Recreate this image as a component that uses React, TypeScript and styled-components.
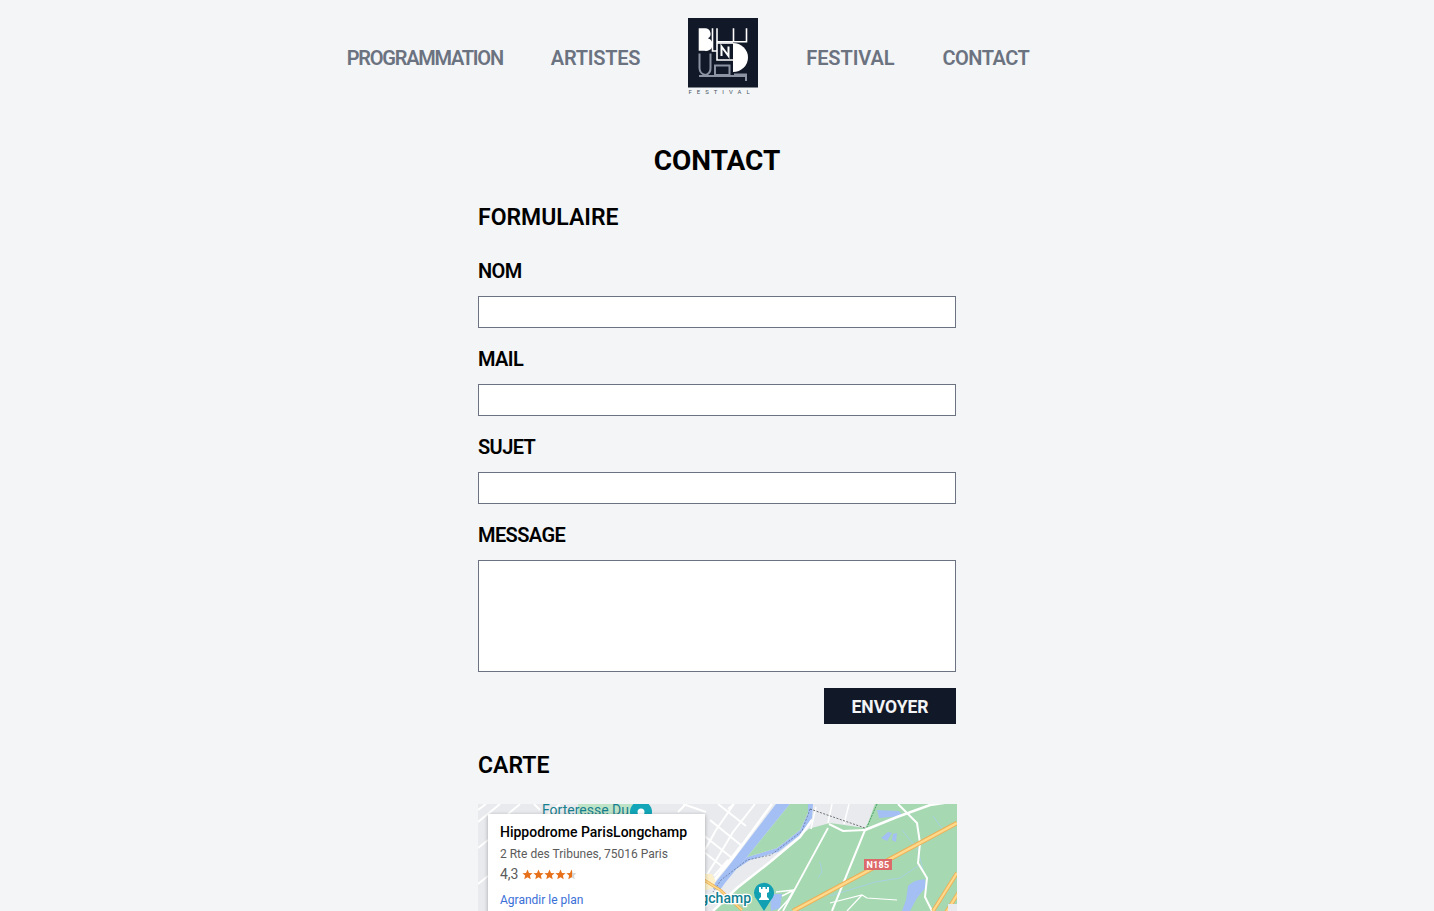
import React from "react";
import styled, { createGlobalStyle } from "styled-components";

const Global = createGlobalStyle`
  html, body { margin: 0; padding: 0; background: #f3f5f7; height: 911px; overflow: hidden; }
  body { font-family: Roboto, "Liberation Sans", sans-serif; }
  * { box-sizing: border-box; }
`;

const Header = styled.header`
  display: flex;
  justify-content: center;
  align-items: flex-start;
  gap: 48px;
  padding: 18px 58px 46px 0;
`;
const NavLink = styled.a<{ $tracking: number }>`
  font-size: 20px;
  line-height: 28px;
  margin-top: 26px;
  font-weight: 600;
  letter-spacing: ${(p) => p.$tracking}px;
  color: #6b7280;
  white-space: nowrap;
`;
const LogoBox = styled.div`
  width: 70px;
  height: 77px;
  display: flex;
`;
const Main = styled.main`
  width: 478px;
  margin: 0 auto;
  display: flex;
  flex-direction: column;
`;
const Title = styled.h1`
  margin: 0 0 21px;
  font-size: 28px;
  line-height: 40px;
  font-weight: 700;
  text-align: center;
  color: #000;
`;
const Section = styled.h2`
  margin: 0 0 22px;
  font-size: 23px;
  line-height: 32px;
  font-weight: 600;
  color: #000;
`;
const Form = styled.form`
  display: flex;
  flex-direction: column;
  gap: 16px;
`;
const Field = styled.div`
  display: flex;
  flex-direction: column;
`;
const Label = styled.label`
  font-size: 20px;
  letter-spacing: -0.6px;
  line-height: 30px;
  margin-bottom: 10px;
  font-weight: 600;
  color: #000;
`;
const Input = styled.input`
  display: block;
  width: 100%;
  height: 32px;
  background: #fff;
  border: 1px solid #6b7280;
  border-radius: 0;
  padding: 0 8px;
`;
const TextArea = styled.textarea`
  display: block;
  width: 100%;
  height: 112px;
  background: #fff;
  border: 1px solid #6b7280;
  border-radius: 0;
  resize: none;
  padding: 8px;
`;
const Submit = styled.button`
  align-self: flex-end;
  width: 132px;
  height: 36px;
  border: 0;
  padding: 2px 0 0;
  background: #111827;
  color: #f3f4f6;
  font-family: inherit;
  font-size: 17.500px;
  font-weight: 700;
  margin-bottom: 26px;
`;
const MapFrame = styled.div`
  position: relative;
  width: 479px;
  height: 300px;
  overflow: hidden;
  background: #a6d8b1;
`;
const MapArt = styled.svg`
  display: block;
  width: 479px;
  height: 300px;
`;
const PlaceCard = styled.div`
  position: absolute;
  left: 10px;
  top: 10px;
  width: 217px;
  padding: 9px 12px;
  background: #fff;
  box-shadow: 0 1px 4px rgba(0, 0, 0, 0.3);
  display: flex;
  flex-direction: column;
  align-items: flex-start;
`;
const PlaceName = styled.div`
  font-size: 14px;
  line-height: 18px;
  font-weight: 500;
  color: #000;
  white-space: nowrap;
`;
const PlaceAddress = styled.div`
  font-size: 12px;
  line-height: 16px;
  margin-top: 5px;
  color: #5b5b5b;
  white-space: nowrap;
`;
const RatingRow = styled.div`
  display: flex;
  align-items: center;
  gap: 3px;
  margin-top: 2px;
  height: 20px;
  font-size: 14px;
  color: #5b5b5b;
`;
const PlaceLink = styled.a`
  font-size: 12px;
  line-height: 16px;
  margin-top: 8px;
  color: #3a6fd8;
`;

const Logo = () => (
  <svg width="70" height="77" viewBox="0 0 70 77" aria-label="Blind Festival">
    <rect width="70" height="69.5" fill="#111827" />
    <path d="M10.700 10.300H16.500a5.400 5.400 0 0 1 3.400 10A6 6 0 0 1 16.500 32.700h-5.800z" fill="#fff" />
    <g fill="none" stroke="#fff" strokeWidth="1.600">
      <path d="M24.500 10.300V33H29" />
      <path d="M29 10.300V42H45" />
      <path d="M29 23.700H58.500V10.300M45.500 10.300V23.700" />
      <path d="M29 25H45" />
    </g>
    <path d="M33.500 38V28.500L40.500 38V28.500" fill="none" stroke="#fff" strokeWidth="2" />
    <path d="M45 25a15 14.500 0 0 1 0 29z" fill="#fff" />
    <g fill="none" stroke="#8c93a3" strokeWidth="2">
      <path d="M11.500 35.500V50a7 7 0 0 0 6 7 7 7 0 0 0 5-7V35.500" />
      <rect x="27" y="47.500" width="14.500" height="9.500" />
      <path d="M46 56.500H58V63" />
      <path d="M11 58H59" />
    </g>
    <text x="0.500" y="75.500" fontSize="6" letterSpacing="5" fill="#4b5563" fontFamily="Roboto, sans-serif">FESTIVAL</text>
  </svg>
);

const Stars = () => {
  const star = "M5.500 0.500l1.500 3.400 3.600.3-2.700 2.400.8 3.600-3.200-1.900-3.200 1.900.8-3.600L.4 4.200 4 3.900z";
  return (
    <svg width="55" height="11" viewBox="0 0 55 11">
      <defs>
        <linearGradient id="half">
          <stop offset="50%" stopColor="#e7711b" />
          <stop offset="50%" stopColor="#d5d5d5" />
        </linearGradient>
      </defs>
      {[0, 1, 2, 3, 4].map((i) => (
        <path key={i} d={star} transform={`translate(${i * 11} 0)`} fill={i === 4 ? "url(#half)" : "#e7711b"} />
      ))}
    </svg>
  );
};

const MapDrawing = () => (
  <MapArt viewBox="0 0 479 300">
    <rect width="479" height="300" fill="#a6d8b1" />
    {/* urban west bank */}
    <path d="M0 0H337L332 24 259 84 235 107 230 300H0z" fill="#e8eaed" />
    <path d="M332 3l5-3h60l-7 19-3 5-35-5-22 6-2 0z" fill="#e8eaed" />
    <g fill="none" stroke="#fff" strokeWidth="2">
      <path d="M0 18L22 0M0 6l8-6M30 10L42 0M62 6l-6-6M70 10L82 0M110 8l10-8M160 8l10-8M200 8l8-8M250 5l6-5" />
      <path d="M228 8L205 0M0 44l10-8M0 80l10-8" />
      <path d="M256 0l-18 26-10 18-6 10M277 0l-22 28-18 30-9 14M224 30l30 24M232 16l32 26M226 48l20 16" />
      <path d="M240 0l28 22M250 56l-14 16M264 40l-22 28" />
    </g>
    <path d="M294 0L254 55 234 79" fill="none" stroke="#fff" strokeWidth="2.500" />
    <path d="M338 3l-5 22M354 0l-4 19M371 0l-5 20" fill="none" stroke="#fff" strokeWidth="1.500" />
    <path d="M222 70h12l6 12-18 6z" fill="#fbf0c9" />
    {/* Seine */}
    <path d="M298 0L272 34 250 63 237 79 235 85 242 86 247 79 260 63 269 53 312 0z" fill="#a3bff4" />
    <path d="M269 53L299 44 322 26 330 9V0H335L334 14 322 31 300 48 272 56 254 68z" fill="#a3bff4" />
    <path d="M332 5l-8 22-31 24-24 5-26 20-8 12" fill="none" stroke="#5f6f8a" strokeWidth="0.700" strokeDasharray="2 1.500" />
    {/* green sliver */}
    <path d="M312 0h18v9l-8 17-23 18-30 9z" fill="#a6d8b1" />
    {/* park boundary road */}
    <path d="M334 16L322 33 292 58 259 84 235 107" fill="none" stroke="#fff" strokeWidth="2.500" />
    <path d="M332 5l55 19" fill="none" stroke="#5f6368" strokeWidth="0.900" strokeDasharray="2 1.500" />
    {/* park streams */}
    <g fill="none" stroke="#a7d0e4" strokeWidth="0.900">
      <path d="M352 92l45-14 25-4 18-12" />
      <path d="M424 26l16 20 6 24" />
      <path d="M455 12l10 14-20 12" />
      <path d="M342 58l2 10-4 6" />
    </g>
    {/* ponds */}
    <path d="M403 34l7-6 4 1-5 8zM415 30l4-1-1 9-4-2z" fill="#a3bff4" />
    <path d="M399 6l22 1 4 5-24 2z" fill="#a3bff4" />
    <path d="M399 0l-10 23" fill="none" stroke="#3d9a5a" strokeWidth="0.900" strokeDasharray="2 1" />
    <path d="M430 82c5-5 10-6 17-7l1 8-9 11-7 13h-8l4-11z" fill="#a3bff4" />
    <path d="M292 90h12l-2 14-9 3z" fill="#a3bff4" />
    {/* park roads */}
    <g fill="none" stroke="#fff">
      <path d="M387 26L419 13 452 1 479 -3" strokeWidth="2.500" />
      <path d="M420 0l19 19 3 20-2 20 9 15-2 19 7 14" strokeWidth="2" />
      <path d="M387 26L354 107" strokeWidth="2" />
      <path d="M350 24L305 107" strokeWidth="1.800" />
      <path d="M351 20l14 7 22-1" strokeWidth="2" />
      <path d="M298 88l18-2-12 6M316 86l-6 10-10 11" strokeWidth="1.500" />
      <path d="M352 99l32-8 5 3 30 2M384 91l-15 16" strokeWidth="1.200" />
    </g>
    {/* highways */}
    <g fill="none" strokeLinecap="butt">
      <path d="M479 19L315 107" stroke="#eeb056" strokeWidth="4.500" />
      <path d="M479 19L315 107" stroke="#fdd98b" strokeWidth="2.500" />
      <path d="M479 69l-24 38M481 88l-14 22" stroke="#eeb056" strokeWidth="4" />
      <path d="M479 69l-24 38M481 88l-14 22" stroke="#fdd98b" strokeWidth="2.200" />
      <path d="M226 76l16 10 22 20" stroke="#eeb056" strokeWidth="3" />
      <path d="M226 76l16 10 22 20" stroke="#fdd98b" strokeWidth="1.500" />
    </g>
    <path d="M470 100h9v10h-9z" fill="#e8eaed" />
    {/* N185 shield */}
    <rect x="386" y="55" width="28" height="11" fill="#dd6a6a" />
    <text x="400" y="63.800" textAnchor="middle" fontSize="9" fontWeight="700" fill="#fff" fontFamily="Roboto, sans-serif" letterSpacing="0.300">N185</text>
    {/* Forteresse du Mont-Valérien label */}
    <path d="M100 0h62v12h-62z" fill="#bfe3c6" />
    <text x="64" y="11" fontSize="14" fill="#17808f" fontFamily="Roboto, sans-serif">Forteresse Du</text>
    <circle cx="163" cy="8" r="11" fill="#13a6b8" />
    <circle cx="163" cy="8" r="3.500" fill="#fff" />
    {/* Longchamp label + marker */}
    <text x="273" y="99" textAnchor="end" fontSize="14" fontWeight="500" fill="#0f7f92" stroke="#fff" strokeWidth="2.500" fontFamily="Roboto, sans-serif" style={{ paintOrder: "stroke" }}>Longchamp</text>
    <path d="M276 89a10 10 0 1 1 17 7l-7 11-7-11a10 10 0 0 1-3-7z" fill="#13a0b2" />
    <path d="M281 83h2v2h1.500v-2h3v2h1.500v-2h2v5l-2 1v4l2 2v1h-10v-1l2-2v-4l-2-1z" fill="#fff" />
  </MapArt>
);

export default function App() {
  return (
    <>
      <Global />
      <Header>
        <NavLink $tracking={-1.25}>PROGRAMMATION</NavLink>
        <NavLink $tracking={-0.25}>ARTISTES</NavLink>
        <LogoBox>
          <Logo />
        </LogoBox>
        <NavLink $tracking={-0.1}>FESTIVAL</NavLink>
        <NavLink $tracking={-0.5}>CONTACT</NavLink>
      </Header>
      <Main>
        <Title>CONTACT</Title>
        <Section>FORMULAIRE</Section>
        <Form>
          <Field>
            <Label>NOM</Label>
            <Input type="text" />
          </Field>
          <Field>
            <Label>MAIL</Label>
            <Input type="text" />
          </Field>
          <Field>
            <Label>SUJET</Label>
            <Input type="text" />
          </Field>
          <Field>
            <Label>MESSAGE</Label>
            <TextArea />
          </Field>
          <Submit type="button">ENVOYER</Submit>
        </Form>
        <Section>CARTE</Section>
        <MapFrame>
          <MapDrawing />
          <PlaceCard>
            <PlaceName>Hippodrome ParisLongchamp</PlaceName>
            <PlaceAddress>2 Rte des Tribunes, 75016 Paris</PlaceAddress>
            <RatingRow>
              4,3 <Stars />
            </RatingRow>
            <PlaceLink>Agrandir le plan</PlaceLink>
          </PlaceCard>
        </MapFrame>
      </Main>
    </>
  );
}
